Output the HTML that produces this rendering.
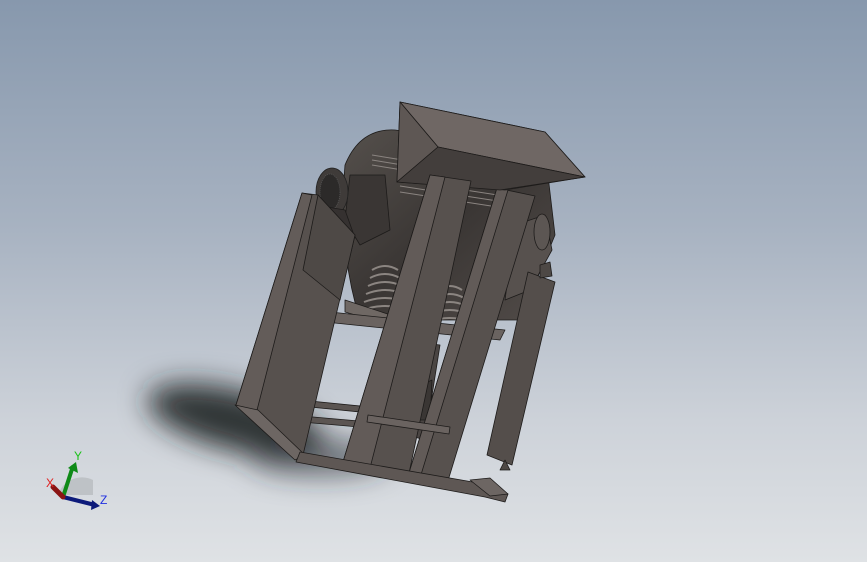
<!DOCTYPE html>
<html><head><meta charset="utf-8"><style>
html,body{margin:0;padding:0;width:867px;height:562px;overflow:hidden}
body{background:linear-gradient(180deg,#8798ad 0%,#a7b2c1 40%,#cdd2d9 75%,#dfe2e5 100%)}
</style></head><body>
<svg width="867" height="562" viewBox="0 0 867 562" xmlns="http://www.w3.org/2000/svg">
<defs>
<filter id="b" filterUnits="userSpaceOnUse" x="0" y="250" width="700" height="312"><feGaussianBlur stdDeviation="14"/></filter>
<linearGradient id="drum" x1="0" y1="0" x2="1" y2="1"><stop offset="0" stop-color="#55504c"/><stop offset="0.5" stop-color="#3a3634"/><stop offset="1" stop-color="#524c49"/></linearGradient>
</defs>
<g filter="url(#b)">
<ellipse cx="235" cy="420" rx="90" ry="30" fill="#202224" opacity="0.9" transform="rotate(14 235 420)"/>
<ellipse cx="320" cy="458" rx="70" ry="18" fill="#2a2c30" opacity="0.6"/>
</g>
<g stroke="#1d1b1a" stroke-width="0.8" stroke-linejoin="round">
<path d="M345,165 Q360,128 395,130 L545,150 L555,235 L520,320 L360,320 Q338,250 345,165Z" fill="url(#drum)"/>
<path d="M515,225 L545,215 L552,250 L530,290 L505,300Z" fill="#57514e"/>
<ellipse cx="542" cy="232" rx="8" ry="18" fill="#5c5653"/>
<g stroke="#8a8480" stroke-width="1">
<path d="M372,155 L495,175 M372,160 L495,180 M372,165 L495,185 M400,180 L530,200 M400,186 L530,206 M400,192 L530,212"/>
</g>
<path d="M350,175 L385,175 L390,230 L360,245 L345,220Z" fill="#3a3634"/>
<ellipse cx="332" cy="192" rx="16" ry="24" fill="#3f3b39" stroke="#222"/>
<ellipse cx="330" cy="192" rx="10" ry="18" fill="#2c2a29" stroke="#555" stroke-dasharray="1 1"/>
<path d="M315,205 L345,210 L355,238 L320,230Z" fill="#353130"/>
<g fill="none" stroke="#8b8581" stroke-width="2">
<path d="M372,270 Q385,262 398,270 M370,278 Q385,270 400,278 M368,286 Q385,278 402,286 M366,294 Q385,286 404,294 M364,302 Q385,294 406,302 M362,310 Q385,302 408,310"/>
<path d="M437,290 Q450,282 462,290 M435,298 Q450,290 464,298 M433,306 Q450,298 466,306 M431,314 Q450,306 468,314 M429,322 Q450,314 470,322"/>
</g>
<path d="M345,300 L400,318 L400,328 L345,312Z" fill="#6f6864"/>
<path d="M330,312 L505,330 L500,340 L325,322Z" fill="#6a6360"/>
<path d="M300,400 L420,412 L420,418 L300,406Z" fill="#5b5552"/>
<path d="M290,415 L440,428 L440,434 L290,421Z" fill="#5b5552"/>
<path d="M398,340 L440,345 L425,440 L390,430Z" fill="#4a4543"/>
<path d="M400,395 L432,380 L430,420 L405,420Z" fill="#3a3634"/>
<path d="M528,272 L555,282 L512,465 L487,455Z" fill="#544e4b"/>
<path d="M540,265 L550,262 L552,276 L540,278Z" fill="#4d4845"/>
<path d="M497,188 L535,196 L447,484 L408,476Z" fill="#57514e"/>
<path d="M497,188 L508,190 L420,478 L408,476Z" fill="#625b58"/>
<path d="M400,102 L545,132 L585,177 L505,190 L397,182Z" fill="#4a4442"/>
<path d="M400,102 L545,132 L585,177 L438,147Z" fill="#6f6764"/>
<path d="M400,102 L438,147 L397,182Z" fill="#5e5754"/>
<path d="M438,147 L585,177 L500,190 L397,182Z" fill="#433e3c"/>
<path d="M302,193 L318,195 L355,235 L303,455 L236,405Z" fill="#57514e"/>
<path d="M302,193 L312,195 L255,418 L236,405Z" fill="#635c59"/>
<path d="M318,195 L355,235 L340,300 L303,270Z" fill="#4e4946"/>
<path d="M235,405 L258,410 L305,455 L295,460Z" fill="#6d6663"/>
<path d="M430,175 L471,181 L408,478 L343,462Z" fill="#57514e"/>
<path d="M430,175 L445,177 L370,468 L343,462Z" fill="#625b58"/>
<path d="M368,415 L450,427 L449,434 L367,422Z" fill="#6a6360"/>
<path d="M300,452 L490,485 L508,494 L505,502 L485,497 L296,462Z" fill="#5e5754"/>
<path d="M470,480 L490,478 L508,494 L490,496Z" fill="#6d6663"/>
<path d="M505,460 L510,470 L500,470Z" fill="#4d4845"/>
</g>
<path d="M58,495 A25,25 0 0 1 93,480 L93,495Z" fill="#b8bcbf" opacity="0.8"/>
<line x1="63" y1="497" x2="73" y2="466" stroke="#0f8a18" stroke-width="4"/>
<path d="M68,468 L76,462 L78,473Z" fill="#0f8a18"/>
<line x1="63" y1="497" x2="95" y2="505" stroke="#0c1a7a" stroke-width="4"/>
<path d="M92,500 L100,506 L91,510Z" fill="#0c1a7a"/>
<line x1="63" y1="497" x2="53" y2="487" stroke="#8a1414" stroke-width="5" stroke-linecap="round"/>
<text x="74" y="460" fill="#1ac21a" font-family="Liberation Sans,sans-serif" font-size="12">Y</text>
<text x="46" y="487" fill="#e02020" font-family="Liberation Sans,sans-serif" font-size="12">X</text>
<text x="100" y="504" fill="#2030e0" font-family="Liberation Sans,sans-serif" font-size="12">Z</text>
</svg>
</body></html>
